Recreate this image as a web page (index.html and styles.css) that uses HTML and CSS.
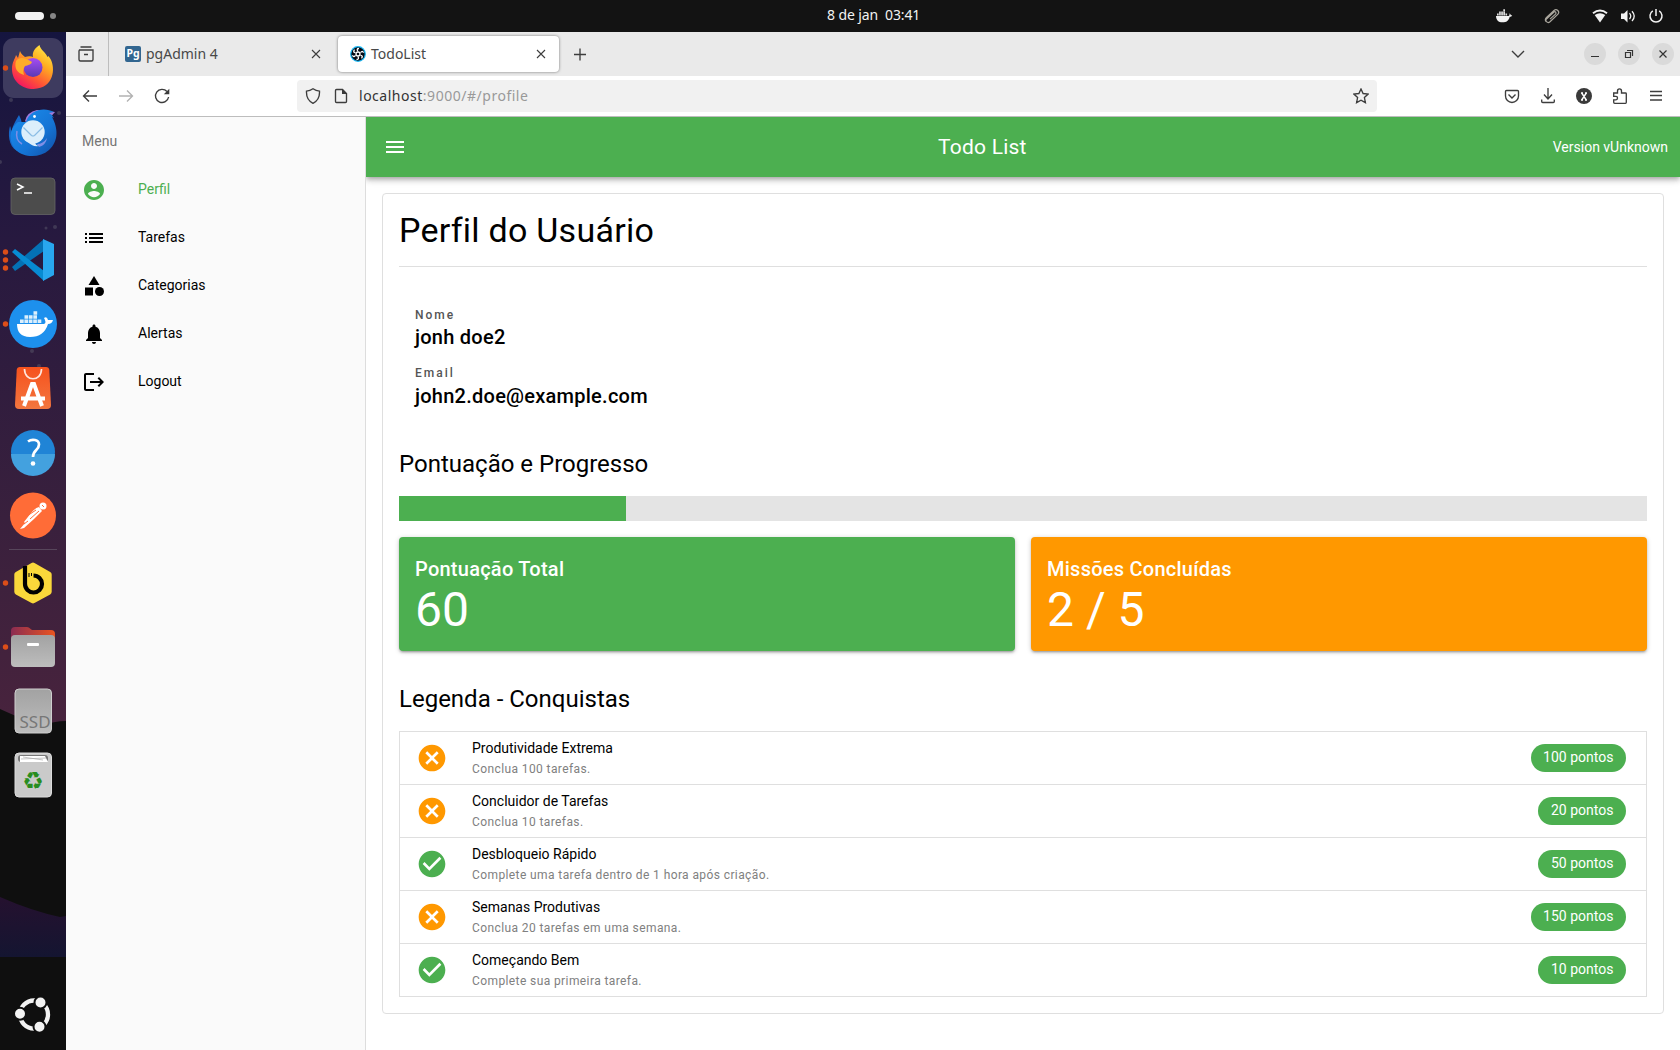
FILE: index.html
```html
<!DOCTYPE html>
<html lang="pt-BR">
<head>
<meta charset="utf-8">
<title>TodoList</title>
<link rel="stylesheet" href="styles.css">
</head>
<body>
<div class="desktop">
  <div class="topbar">
    <div class="workspaces"><span class="ws-active"></span><span class="ws-dot"></span></div>
    <div class="clock">8 de jan&nbsp; 03:41</div>
    <div class="tray">
      <svg class="tray-far" viewBox="0 0 20 20"><path fill="#f2f2f2" d="M2 10h12.500c.9-.3 1.300-1.200.8-2.500 1 .4 1.500 1 1.600 1.700h1.300c-.4 1.100-1.200 1.500-2.500 1.500-1 4-3.200 5.600-7.200 5.600C4.300 16.300 2.200 14.200 2 10z"/><path stroke="#ddd" stroke-width="2" stroke-dasharray="1.700 .4" d="M3 8.600h10.500M5.100 6.500h6.300M9.300 4.300h2"/></svg>
      <svg class="tray-far" viewBox="0 0 20 20" fill="none" stroke="#aaa69d" stroke-width="1.200"><path d="M4.500 11.500l7.500-7q2-1.700 3.800 0t.2 3.700l-8 7.500q-1.700 1.500-3.300.2t0-3.200l7-6.500q1.200-1 2 0t-.2 1.900l-5.500 5M4.500 11.500q-2 2.300-.5 4"/></svg>
      <svg viewBox="0 0 20 20" fill="none"><path d="M3 7.200Q10 1.800 17 7.200" stroke="#f2f2f2" stroke-width="2"/><path fill="#f2f2f2" d="M4.700 9q5.300-3.700 10.600 0L10 16.500z"/></svg>
      <svg viewBox="0 0 20 20" fill="none" stroke="#f2f2f2" stroke-width="1.300"><path fill="#f2f2f2" stroke="none" d="M3 7.500h3L9.500 4v12.600L6 13H3z"/><path d="M11.500 7.200q2.500 2.900 0 5.800M14 5.200q4.500 4.900 0 9.800"/></svg>
      <svg viewBox="0 0 20 20" fill="none" stroke="#f2f2f2" stroke-width="1.500"><path d="M6.800 4.900a6 6 0 1 0 6.400 0M10 3v7"/></svg>
    </div>
  </div>

  <div class="workspace">
    <nav class="dock">
      <svg class="dock-bg" viewBox="0 32 66 1018"><defs><linearGradient id="sky" x2="0" y2="1"><stop offset="0" stop-color="#15153f"/><stop offset=".3" stop-color="#27193f"/><stop offset=".7" stop-color="#39203d"/><stop offset="1" stop-color="#48233d"/></linearGradient><linearGradient id="hill" x2="0" y2="1"><stop offset="0" stop-color="#25112f"/><stop offset="1" stop-color="#141531"/></linearGradient></defs>
        <path fill="#0f0f0f" d="M0 32h66v1018H0z"/><path fill="url(#sky)" d="M0 32h66v689q-12 0-25 5Q22 719 0 709z"/><path fill="url(#hill)" d="M0 897q32 14 60 20l6-1v41H0z"/>
        <g fill="#5a586b" opacity=".5"><circle cx="11" cy="100" r="2"/><circle cx="59" cy="113" r="2"/><circle cx="55" cy="227" r="2"/><circle cx="46" cy="228" r="1.500"/><circle cx="32" cy="351" r="2"/><circle cx="39" cy="366" r="2"/><circle cx="0" cy="162" r="2"/></g></svg>
      <div class="dock-items">
        <svg viewBox="0 36 66 64"><defs><linearGradient id="ff" x1=".85" y1="0" x2=".2" y2="1"><stop offset="0" stop-color="#fff14a"/><stop offset=".35" stop-color="#ffad22"/><stop offset=".68" stop-color="#ff5535"/><stop offset="1" stop-color="#f20b68"/></linearGradient><linearGradient id="ffg" x2="0" y2="1"><stop offset="0" stop-color="#a64cf3"/><stop offset="1" stop-color="#593ab3"/></linearGradient></defs>
          <rect x="3" y="38" width="60" height="60" rx="11" fill="#3e3b5f"/><circle cx="5.500" cy="68" r="2.700" fill="#dc4e19"/>
          <path fill="url(#ff)" d="M12 69c0-7 3-10 4-14l2 3 2-7c1 3 3 4 5 6 3-1 6-1 8 0-1-5 2-9 6.500-12 1 5 6 7 8 12l1-1 2 3c5 9 4 29-17 30-12 0-21.500-8-21.500-20z"/>
          <circle cx="33" cy="67.500" r="9.500" fill="url(#ffg)"/><path fill="#ffad29" d="M16 61c4-5 9-3 16 1-1 3-4 3-7 4-2 3-2 6-1 9-7-2-10-7-8-14z"/></svg>
        <svg viewBox="0 100 66 64"><defs><linearGradient id="tb" x2="1" y2="1"><stop offset="0" stop-color="#1c90ef"/><stop offset=".6" stop-color="#1574d5"/><stop offset="1" stop-color="#104ea5"/></linearGradient></defs>
          <path fill="#a37bdc" d="M25 121q2-9 12-11l18 2-18 20z"/><path fill="#1768c8" d="M10 126c1 2 1 4 1 6 2-7 5-12 8-17 3 6 4 11 2 18l-4 18C8 146 8 133 10 126z"/><path fill="url(#tb)" d="M26 122c4-13 19-15 28-10l-5 1q4 2 5 5l-2-1c6 11 7 24-3 33-9 8-25 8-33 0-7-8-8-20 2-28z"/><path d="M17 131q-2 9 5 13" fill="none" stroke="#7f8fe6" stroke-width="1.500"/><path d="M37 144q6 0 10-6-1 7-8 9z" fill="#7f8fe6"/><circle cx="33" cy="132" r="11.700" fill="#dceefb"/><path d="M23.500 127.500l8 8q1.500 1 3 0l8-8" fill="none" stroke="#8abce4" stroke-width="1.200"/><path d="M28 142q4 5 11 4-4-1-4-4z" fill="#dceefb"/><circle cx="34.500" cy="116.500" r="1.400" fill="#fff"/></svg>
        <svg viewBox="0 164 66 64"><rect x="11" y="178" width="44" height="36.500" rx="4" fill="#4c4c4c" stroke="#656565" stroke-width=".8"/><path d="M17 184l6 3-6 3M24 193h8" fill="none" stroke="#fff" stroke-width="1.500"/></svg>
        <svg viewBox="0 228 66 64"><g fill="#dc4e19"><circle cx="5.500" cy="252" r="2.700"/><circle cx="5.500" cy="260" r="2.700"/><circle cx="5.500" cy="268" r="2.700"/></g><path fill="#0471b5" d="M12 267l3 4L44 251v-12z"/><path fill="#078bd3" d="M12 252l3-3 29 22v10z"/><path fill="#28a7ef" d="M43 239l11 5v31l-11 6z"/></svg>
        <svg viewBox="0 292 66 64"><circle cx="33" cy="324" r="24" fill="#1d90ed"/><circle cx="5.500" cy="324" r="2.700" fill="#dc4e19"/><path fill="#fff" d="M17 324h27q3-1 0-6 3-2 4 2h5q-1 4-5 4-4 13-18 13c-9 0-13-5-13-13z"/><path stroke="#dceffc" stroke-width="3.500" stroke-dasharray="3.700 .7" d="M20 321.300h22M24.500 317h13.200M33.500 313h3.700"/></svg>
        <svg viewBox="0 356 66 64"><defs><linearGradient id="bag" x2="0" y2="1"><stop offset="0" stop-color="#f6521d"/><stop offset="1" stop-color="#f3763f"/></linearGradient></defs><path fill="url(#bag)" d="M20 367h26q3 0 3.300 3L51 405q0 4-4 4H19q-4 0-4-4l1.700-35q.3-3 3.300-3z"/><path d="M24.500 369c0 13 17 13 17 0" fill="none" stroke="#ffe6dd" stroke-width="1.700"/><path d="M21 398.500h24M24 406l8-22h2l8 22" fill="none" stroke="#fff" stroke-width="4"/></svg>
        <svg viewBox="0 420 66 64"><circle cx="33" cy="452" r="22" fill="#2084d6"/><path fill="#43a1df" d="M11 454h44a22 22 0 0 1-44 0z"/><path d="M28 441.500c4-3 11-2 11 3 0 6-6 5-6 12.500" fill="none" stroke="#fff" stroke-width="2.700"/><circle cx="33" cy="463.500" r="2.300" fill="#fff"/></svg>
        <svg viewBox="0 484 66 64"><circle cx="33" cy="515.500" r="23" fill="#ff6c37"/><circle cx="43" cy="506" r="3.500" fill="#fff"/><path fill="#fff" d="M39 507l3 4-8 8-10 9-4 1 5-6-1-1 7-9q4-5 8-6z"/><path d="M27 516l9-6M30 519l9-8M24 524l4-3M42 505l2 2" stroke="#ff6c37"/></svg>
        <span class="dock-sep"></span>
        <svg viewBox="0 551 66 64"><path fill="#fad83b" stroke="#fad83b" stroke-width="6" stroke-linejoin="round" d="M33 565.500l15.700 9v17.300L33 600.500l-15.700-8.700v-17.300z"/><path d="M25 566v18a8.500 8.500 0 1 0 8.500-8.500" fill="none" stroke="#000" stroke-width="4.200"/><path d="M29 573v4M31.500 573v3" stroke="#000"/><circle cx="5.500" cy="583" r="2.700" fill="#dc4e19"/></svg>
        <svg viewBox="0 615 66 64"><defs><linearGradient id="fold"><stop stop-color="#8b2c52"/><stop offset="1" stop-color="#ea5420"/></linearGradient><linearGradient id="grey" x2="0" y2="1"><stop stop-color="#a2a2a2"/><stop offset="1" stop-color="#bdbdbd"/></linearGradient></defs><path fill="url(#fold)" d="M11 643v-12q0-4 4-4h12q2 0 3 1.500l2 1.500h19q4 0 4 4v9z"/><rect x="11" y="635" width="44" height="32" rx="4" fill="url(#grey)"/><rect x="27" y="643" width="12" height="3" rx="1" fill="#fff"/><circle cx="5.500" cy="647" r="2.700" fill="#dc4e19"/></svg>
        <svg viewBox="0 679 66 64"><rect x="15" y="689" width="36.500" height="44" rx="4" fill="url(#grey)" stroke="#cfcfcf"/><text class="ssd" x="19.500" y="728">SSD</text></svg>
        <svg viewBox="0 743 66 64"><rect x="15" y="753" width="36.500" height="44" rx="4" fill="#cacaca" stroke="#ddd"/><rect x="18" y="755" width="30" height="7" rx="3" fill="#777"/><path fill="#fff" d="M20 756h25l3 6H20z"/><path d="M21 759l25-1M23 757l20 3" stroke="#aaa" stroke-width=".7"/><text class="recycle" x="33" y="789">♻</text></svg>
      </div>
      <svg class="launcher" viewBox="0 984 66 64"><circle cx="34" cy="1014.500" r="14" fill="none" stroke="#f2f2f2" stroke-width="4.300"/><g fill="#f2f2f2" stroke="#0f0f0f" stroke-width="2"><circle cx="20" cy="1013.700" r="6"/><circle cx="40.500" cy="1002.500" r="6"/><circle cx="39.500" cy="1026.700" r="6"/></g></svg>
    </nav>

    <div class="browser">
      <div class="tabs">
        <div class="firefox-view"><svg class="ic16" viewBox="0 0 16 16"><path d="M2.500 1h11M1 4h14v9.500q0 1.500-1.500 1.500h-11Q1 15 1 13.500V5q0-1 1-1M6 8.500h4"/></svg></div>
        <div class="tab">
          <svg class="favicon" viewBox="0 0 16 16"><rect width="16" height="16" rx="2" fill="#326690"/><text class="pg" x="8" y="10.500">Pg</text></svg>
          <span class="tab-title">pgAdmin 4</span><svg class="close" viewBox="0 0 16 16"><path d="M4 4l8 8M12 4l-8 8"/></svg>
        </div>
        <div class="tab active">
          <svg class="favicon" viewBox="0 0 16 16"><circle cx="8" cy="8" r="7.300" fill="#050a14" stroke="#1ab8f5" stroke-width="1.200"/><g fill="none" stroke="#fff" stroke-width="1.300"><circle cx="8" cy="8" r="2"/><path d="M8 5.500Q6 2.500 9 2.500M10.500 6.700q2-2.700 3 0M10.500 9.300q3 .3 1 3M8 10.500q1.500 3-1.500 3M5.500 9.300q-2 2.700-3 0M5.500 6.700q-3-.3-1-3"/></g></svg>
          <span class="tab-title">TodoList</span><svg class="close" viewBox="0 0 16 16"><path d="M4 4l8 8M12 4l-8 8"/></svg>
        </div>
        <svg class="ic16 plus" viewBox="0 0 16 16"><path d="M8 2.500v12M2 8.500h12"/></svg>
        <svg class="ic16 chevron" viewBox="0 0 16 16"><path d="M2 5l6 6 6-6"/></svg>
        <div class="win-buttons">
          <svg viewBox="0 0 22 22"><path d="M7 13.500h8"/></svg>
          <svg viewBox="0 0 22 22"><path d="M7.500 9.500h5v5h-5zM9 7.500h5.500V13"/></svg>
          <svg viewBox="0 0 22 22"><path d="M7.500 7.500l7 7M14.500 7.500l-7 7"/></svg>
        </div>
      </div>
      <div class="navbar">
        <div class="nav-buttons">
          <svg class="ic16" viewBox="0 0 16 16"><path d="M15 8H1.500M7 2.500L1.500 8 7 13.500"/></svg>
          <svg class="ic16 disabled" viewBox="0 0 16 16"><path d="M1 8h13.500M9 2.500L14.500 8 9 13.500"/></svg>
          <svg class="ic16" viewBox="0 0 16 16"><path d="M13 3.500A6.600 6.600 0 1 0 14.600 9"/><path class="solid" d="M15.300.8v5.500H9.800z"/></svg>
        </div>
        <div class="urlbar">
          <svg class="ic16" viewBox="0 0 16 16"><path d="M8 .8Q11 3 14.500 3.200 15 12 8 15.300 1 12 1.500 3.200 5 3 8 .8z"/></svg>
          <svg class="ic16 page" viewBox="0 0 16 16"><path d="M3.500 1.500h6l4 4v8q0 1-1 1h-9q-1 0-1-1v-11q0-1 1-1z"/><path class="solid" d="M9 1l5 5H9z"/></svg>
          <span class="url"><b>localhost</b>:9000/#/profile</span>
          <svg class="ic16" viewBox="0 0 16 16"><path d="M8 1l2.100 4.500 5 .6-3.700 3.500 1 5L8 12.200l-4.400 2.400 1-5L.9 6.100l5-.6z"/></svg>
        </div>
        <div class="nav-right">
          <svg class="ic16" viewBox="0 0 16 16"><path d="M2.500 2.500h11q1 0 1 1V8A6.500 6.500 0 0 1 1.500 8V3.500q0-1 1-1zM4.500 6.500L8 10l3.500-3.500"/></svg>
          <svg class="ic16" viewBox="0 0 16 16"><path d="M8 0v11M4 6.500L8 11l4-4.500M1.700 11.500v2q0 1 1 1h10.600q1 0 1-1v-2"/></svg>
          <svg class="ic16" viewBox="0 0 16 16"><circle class="solid" cx="8" cy="8" r="8"/><path class="white" d="M5.700 5l4.600 7M10.300 5l-4.600 7M5 5h2M9 5h2M5 12h2M9 12h2"/></svg>
          <svg class="ic16" viewBox="0 0 16 16"><path d="M2 5h3.500V3Q5.500.8 7.500.8t2 2.200v2h4q.8 0 .8.800v8.500q0 1-.8 1H2.700q-1 0-1-1v-2.500H4q1.500 0 1.500-1.700T4 8.400H1.700V5z"/></svg>
          <svg class="ic16" viewBox="0 0 16 16"><path d="M2 3.500h12M2 7.500h12M2 12h12"/></svg>
        </div>
      </div>

      <div class="page-view">
        <aside class="drawer">
          <div class="drawer-head">Menu</div>
          <a class="drawer-item current"><svg viewBox="0 0 24 24"><path d="M12 2C6.480 2 2 6.480 2 12s4.480 10 10 10 10-4.480 10-10S17.520 2 12 2zm0 3c1.660 0 3 1.340 3 3s-1.340 3-3 3-3-1.340-3-3 1.340-3 3-3zm0 14.200c-2.500 0-4.710-1.280-6-3.220.03-1.990 4-3.080 6-3.080 1.990 0 5.970 1.090 6 3.080-1.290 1.940-3.500 3.220-6 3.220z"/></svg>Perfil</a>
          <a class="drawer-item"><svg viewBox="0 0 24 24"><path d="M3 13h2v-2H3v2zm0 4h2v-2H3v2zm0-8h2V7H3v2zm4 4h14v-2H7v2zm0 4h14v-2H7v2zM7 7v2h14V7H7z"/></svg>Tarefas</a>
          <a class="drawer-item"><svg viewBox="0 0 24 24"><path d="M12 2l-5.500 9h11z"/><circle cx="17.500" cy="17.500" r="4.500"/><path d="M3 13.500h8v8H3z"/></svg>Categorias</a>
          <a class="drawer-item"><svg viewBox="0 0 24 24"><path d="M12 22c1.100 0 2-.9 2-2h-4c0 1.100.89 2 2 2zm6-6v-5c0-3.070-1.640-5.640-4.500-6.320V4c0-.83-.67-1.500-1.500-1.500s-1.500.67-1.500 1.500v.68C7.630 5.360 6 7.920 6 11v5l-2 2v1h16v-1l-2-2z"/></svg>Alertas</a>
          <a class="drawer-item"><svg viewBox="0 0 24 24"><path d="M17 7l-1.410 1.410L18.170 11H8v2h10.170l-2.580 2.580L17 17l5-5zM4 5h8V3H4c-1.100 0-2 .9-2 2v14c0 1.100.9 2 2 2h8v-2H4V5z"/></svg>Logout</a>
        </aside>
        <div class="main">
          <header class="app-header">
            <svg viewBox="0 0 24 24"><path d="M3 18h18v-2H3v2zm0-5h18v-2H3v2zm0-7v2h18V6H3z"/></svg>
            <div class="app-title">Todo List</div>
            <div class="version">Version vUnknown</div>
          </header>
          <section class="card">
            <h1>Perfil do Usuário</h1>
            <dl class="info">
              <dt>Nome</dt><dd>jonh doe2</dd>
              <dt class="second">Email</dt><dd>john2.doe@example.com</dd>
            </dl>
            <h2>Pontuação e Progresso</h2>
            <div class="progress"><div class="progress-fill" style="width:18.18%"></div></div>
            <div class="stats">
              <div class="stat green"><h3>Pontuação Total</h3><div class="value">60</div></div>
              <div class="stat orange"><h3>Missões Concluídas</h3><div class="value">2 / 5</div></div>
            </div>
            <h2 class="legend">Legenda - Conquistas</h2>
            <ul class="achievements">
              <li><svg class="pending" viewBox="0 0 24 24"><path d="M12 2C6.470 2 2 6.470 2 12s4.470 10 10 10 10-4.470 10-10S17.530 2 12 2zm5 13.590L15.590 17 12 13.410 8.410 17 7 15.590 10.590 12 7 8.410 8.410 7 12 10.590 15.590 7 17 8.410 13.410 12 17 15.590z"/></svg><div class="what"><div class="name">Produtividade Extrema</div><div class="desc">Conclua 100 tarefas.</div></div><span class="chip">100 pontos</span></li>
              <li><svg class="pending" viewBox="0 0 24 24"><path d="M12 2C6.470 2 2 6.470 2 12s4.470 10 10 10 10-4.470 10-10S17.530 2 12 2zm5 13.590L15.590 17 12 13.410 8.410 17 7 15.590 10.590 12 7 8.410 8.410 7 12 10.590 15.590 7 17 8.410 13.410 12 17 15.590z"/></svg><div class="what"><div class="name">Concluidor de Tarefas</div><div class="desc">Conclua 10 tarefas.</div></div><span class="chip">20 pontos</span></li>
              <li><svg class="done" viewBox="0 0 24 24"><path d="M12 2C6.480 2 2 6.480 2 12s4.480 10 10 10 10-4.480 10-10S17.520 2 12 2zm-2 15l-5-5 1.410-1.410L10 14.170l7.590-7.590L19 8l-9 9z"/></svg><div class="what"><div class="name">Desbloqueio Rápido</div><div class="desc">Complete uma tarefa dentro de 1 hora após criação.</div></div><span class="chip">50 pontos</span></li>
              <li><svg class="pending" viewBox="0 0 24 24"><path d="M12 2C6.470 2 2 6.470 2 12s4.470 10 10 10 10-4.470 10-10S17.530 2 12 2zm5 13.590L15.590 17 12 13.410 8.410 17 7 15.590 10.590 12 7 8.410 8.410 7 12 10.590 15.590 7 17 8.410 13.410 12 17 15.590z"/></svg><div class="what"><div class="name">Semanas Produtivas</div><div class="desc">Conclua 20 tarefas em uma semana.</div></div><span class="chip">150 pontos</span></li>
              <li><svg class="done" viewBox="0 0 24 24"><path d="M12 2C6.480 2 2 6.480 2 12s4.480 10 10 10 10-4.480 10-10S17.520 2 12 2zm-2 15l-5-5 1.410-1.410L10 14.170l7.590-7.590L19 8l-9 9z"/></svg><div class="what"><div class="name">Começando Bem</div><div class="desc">Complete sua primeira tarefa.</div></div><span class="chip">10 pontos</span></li>
            </ul>
          </section>
        </div>
      </div>
    </div>
  </div>
</div>
</body>
</html>
```
FILE: styles.css
```css
* { box-sizing: border-box; margin: 0; padding: 0; }
body { width: 1680px; height: 1050px; overflow: hidden; font-family: Roboto, sans-serif; font-size: 14px; color: #000; }
svg { display: block; flex: none; }
.desktop { display: flex; flex-direction: column; height: 1050px; }

/* system bar */
.topbar { height: 32px; background: #131313; display: grid; grid-template-columns: 1fr auto 1fr; align-items: center; color: #f2f2f2; font-family: "Noto Sans", sans-serif; }
.workspaces { display: flex; align-items: center; gap: 6px; padding-left: 15px; }
.ws-active { width: 29px; height: 8px; border-radius: 4px; background: #f2f2f2; }
.ws-dot { width: 6px; height: 6px; border-radius: 3px; background: #868686; }
.clock { width: 92px; margin-left: 66px; font-size: 14px; line-height: 20px; letter-spacing: -.12px; white-space: nowrap; padding-bottom: 2px; }
.tray { display: flex; justify-content: flex-end; gap: 8px; padding-right: 14px; }
.tray svg { width: 20px; height: 20px; }
.tray .tray-far { margin-right: 20px; }

.workspace { flex: 1; display: flex; min-height: 0; }
.dock { width: 66px; position: relative; display: flex; flex-direction: column; justify-content: space-between; padding: 4px 0 2px; }
.dock-bg { position: absolute; left: 0; top: 0; width: 66px; height: 1018px; }
.dock-items { position: relative; display: flex; flex-direction: column; }
.dock-items svg, .launcher { position: relative; width: 66px; height: 64px; }
.dock-sep { height: 1px; width: 48px; margin: 1px 9px; background: #57465b; }
.ssd { font: 17px "Noto Sans", sans-serif; fill: #777; }
.recycle { font: 24px "DejaVu Sans", sans-serif; fill: #288d20; text-anchor: middle; }
.pg { font: bold 10.5px "Noto Sans", sans-serif; fill: #fff; text-anchor: middle; }

/* browser chrome */
.browser { flex: 1; display: flex; flex-direction: column; min-width: 0; background: #fff; font-family: "Noto Sans", sans-serif; }
.ic16, .close { fill: none; stroke: #3d3d3d; stroke-width: 1.35; }
.ic16 { width: 16px; height: 16px; }
.ic16 .solid { fill: #3a3a3a; stroke: none; }
.ic16 .white { stroke: #fff; stroke-width: 1.4; }
.disabled { stroke: #b2b2b2; }
.tabs { height: 44px; background: #eaeaea; display: flex; align-items: center; }
.firefox-view { width: 43px; height: 44px; border-right: 1px solid #bdbdbd; display: flex; align-items: center; padding-left: 12px; }
.tab { width: 221px; height: 36px; margin-left: 4px; padding: 0 10px 0 12px; display: flex; align-items: center; border-radius: 4px; }
.tab.active { margin-left: 0; }
.tab:not(.active) { width: 225px; padding-right: 14px; }
.active { background: #fff; box-shadow: 0 0 3px rgba(0,0,0,.5); }
.favicon { width: 16px; height: 16px; }
.tab-title { flex: 1; margin-left: 5px; font-size: 14px; color: #484848; line-height: 20px; padding-bottom: 1px; }
.tab .close { width: 16px; height: 16px; stroke-width: 1.1; }
.plus { margin-left: 13px; }
.chevron { margin-left: auto; }
.win-buttons { display: flex; gap: 12px; margin: 0 6px 0 58px; }
.win-buttons svg { width: 22px; height: 22px; border-radius: 11px; background: #dadada; fill: none; stroke: #333; stroke-width: 1.2; }
.navbar { height: 41px; border-bottom: 1px solid #bdbdbd; display: flex; align-items: center; }
.nav-buttons { width: 231px; display: flex; gap: 20px; padding-left: 16px; }
.urlbar { width: 1080px; height: 32px; background: #f1f1f1; border-radius: 4px; display: flex; align-items: center; padding: 0 8px; }
.page { margin-left: 12px; }
.url { flex: 1; margin-left: 10px; font-size: 14px; letter-spacing: .52px; line-height: 20px; color: #999; }
.url b { font-weight: 400; color: #333; }
.nav-right { display: flex; gap: 20px; margin-left: auto; padding-right: 16px; }

/* application */
.page-view { flex: 1; display: flex; min-height: 0; font-family: Roboto, sans-serif; }
.drawer { width: 300px; background: #fafafa; border-right: 1px solid #ddd; }
.drawer-head { height: 48px; line-height: 48px; padding-left: 16px; color: #757575; }
.drawer-item { height: 48px; padding-left: 16px; display: flex; align-items: center; gap: 32px; line-height: 20px; }
.drawer-item svg { width: 24px; height: 24px; fill: currentColor; margin-top: 2px; }
.current { color: #4caf50; }
.main { flex: 1; display: flex; flex-direction: column; overflow: hidden; }
.app-header { height: 60px; background: #4caf50; color: #fff; display: flex; align-items: center; padding: 0 12px 0 17px; box-shadow: 0 2px 4px -1px rgba(0,0,0,.2), 0 4px 5px rgba(0,0,0,.14), 0 1px 10px rgba(0,0,0,.12); }
.app-header svg { width: 24px; height: 24px; fill: #fff; }
.app-title { flex: 1; font-size: 21px; letter-spacing: .01em; text-align: center; padding-left: 5px; }
.card { margin: 16px 16px 0; border: 1px solid #dfdfdf; border-radius: 4px; padding: 16px; }
h1 { font-size: 34px; line-height: 40px; font-weight: 400; letter-spacing: .00735em; padding-bottom: 16px; border-bottom: 1px solid #dfdfdf; }
h2 { font-size: 24px; line-height: 32px; font-weight: 400; }
.info { padding: 38px 16px 40px; }
dt { font-size: 12px; line-height: 20px; font-weight: 500; letter-spacing: .16667em; color: #555; }
dt.second { margin-top: 14px; margin-bottom: 1px; }
dd { font-size: 20px; line-height: 24px; font-weight: 500; letter-spacing: .0125em; }
.progress { height: 25px; margin-top: 16px; background: #e4e4e4; }
.progress-fill { height: 100%; background: #4caf50; }
.stats { display: grid; grid-template-columns: 1fr 1fr; gap: 16px; margin-top: 16px; }
.stat { padding: 16px; color: #fff; border-radius: 4px; box-shadow: 0 1px 5px rgba(0,0,0,.2), 0 2px 2px rgba(0,0,0,.14), 0 3px 1px -2px rgba(0,0,0,.12); }
.green { background: #4caf50; }
.orange { background: #ff9800; }
h3 { font-size: 20px; line-height: 32px; font-weight: 500; letter-spacing: .0125em; }
.value { font-size: 48px; line-height: 50px; }
.legend { margin-top: 32px; }
.achievements { list-style: none; margin-top: 16px; border: 1px solid #dfdfdf; }
li { height: 53px; display: flex; align-items: center; padding: 0 20px 0 16px; border-bottom: 1px solid #dfdfdf; }
li:last-child { height: 52px; border-bottom: 0; }
li svg { width: 32px; height: 32px; }
.pending { fill: #ff9800; }
.done { fill: #4caf50; }
.what { flex: 1; margin-left: 24px; }
.name { line-height: 17px; }
.desc { margin-top: 5px; font-size: 12px; line-height: 14px; letter-spacing: .03333em; color: #808080; }
.chip { height: 28px; line-height: 26px; border-radius: 14px; padding: 0 12.6px; background: #4caf50; color: #fff; }
```
